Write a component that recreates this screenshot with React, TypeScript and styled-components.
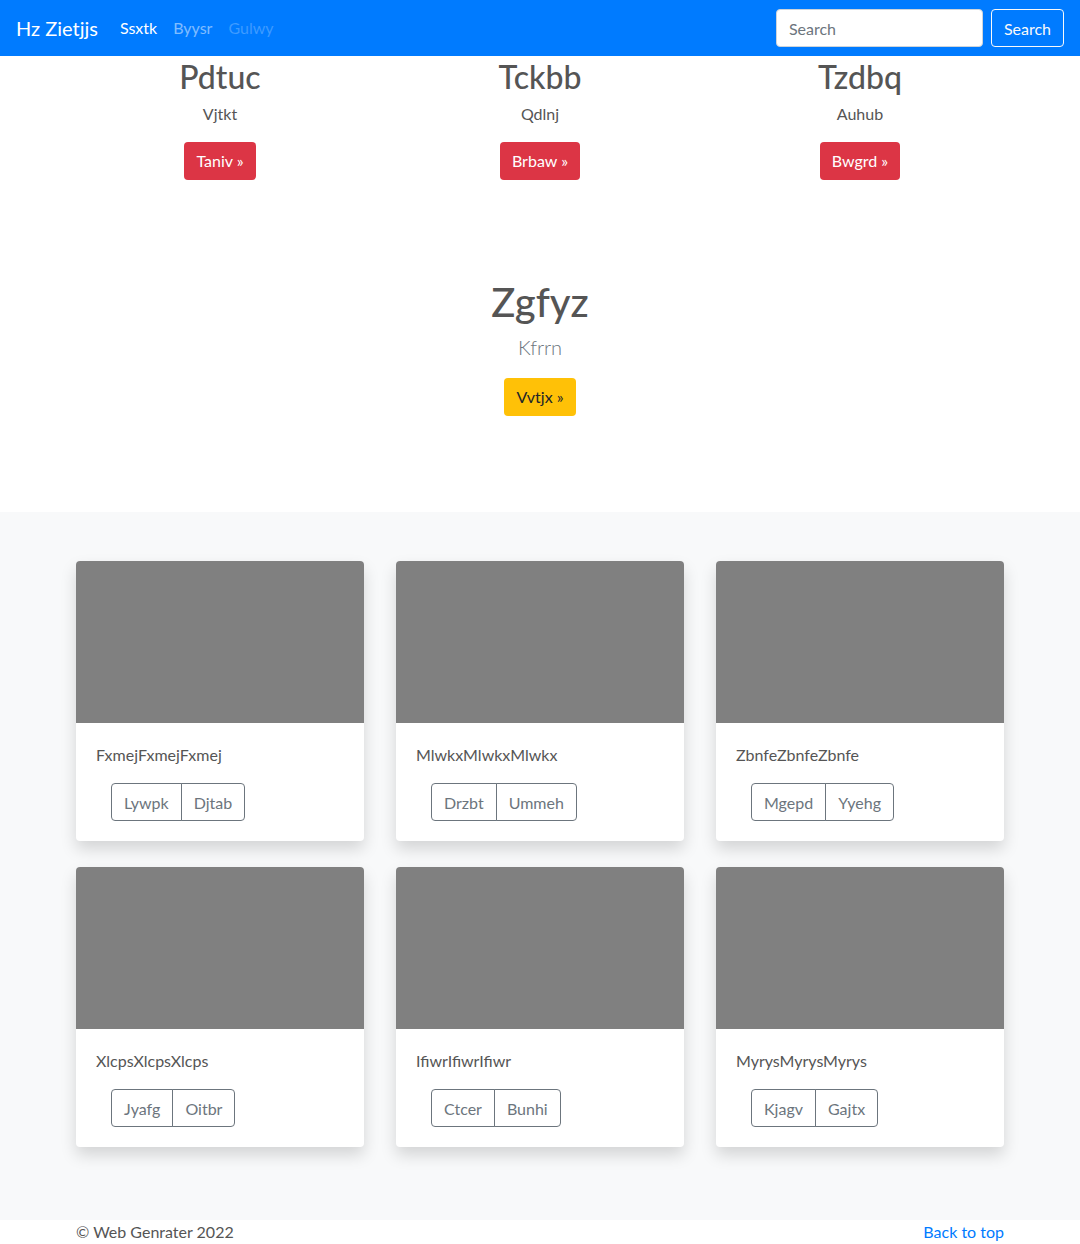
import React from "react";
import styled, { createGlobalStyle } from "styled-components";

const Global = createGlobalStyle`
  * { box-sizing: border-box; }
  body {
    margin: 0;
    font-family: Lato, "Noto Sans", sans-serif;
    font-size: 16px;
    line-height: 1.5;
    color: #555;
    background: #fff;
  }
`;

const Navbar = styled.nav`
  height: 56px;
  background: #007bff;
  display: flex;
  align-items: center;
  padding: 0 16px;
`;

const Brand = styled.a`
  font-size: 20px;
  color: #fff;
  margin-right: 14px;
  line-height: 30px;
  text-decoration: none;
`;

const NavLinks = styled.div`
  display: flex;
  flex: 1;
`;

const NavLink = styled.a<{ $alpha: number }>`
  padding: 8px;
  font-size: 16px;
  color: rgba(255, 255, 255, ${(p) => p.$alpha});
  text-decoration: none;
`;

const SearchForm = styled.form`
  display: flex;
  gap: 8px;
  align-items: center;
`;

const SearchInput = styled.input`
  width: 207px;
  height: 38px;
  border: 1px solid #ced4da;
  border-radius: 4px;
  padding: 6px 12px;
  font-family: inherit;
  font-size: 16px;
  color: #495057;
  &::placeholder { color: #6c757d; }
`;

const OutlineLightButton = styled.button`
  height: 38px;
  padding: 6px 12px;
  background: transparent;
  border: 1px solid #f8f9fa;
  border-radius: 4px;
  color: #f8f9fa;
  font-family: inherit;
  font-size: 16px;
`;

const Container = styled.div`
  width: 960px;
  margin: 0 auto;
`;

const FeatureRow = styled.div`
  display: grid;
  grid-template-columns: repeat(3, 1fr);
`;

const Feature = styled.div`
  text-align: center;
  padding: 0 15px;
`;

const FeatureTitle = styled.h2`
  font-size: 32px;
  font-weight: 500;
  line-height: 1.2;
  padding-top: 2px;
  margin: 0 0 6px;
  color: #555;
`;

const Para = styled.p`
  margin: 0 0 16px;
`;

const SolidButton = styled.a<{ $bg: string; $fg: string }>`
  display: inline-flex;
  align-items: center;
  height: 38px;
  padding: 0 12px;
  font-size: 16px;
  border-radius: 4px;
  background: ${(p) => p.$bg};
  color: ${(p) => p.$fg};
  text-decoration: none;
  vertical-align: top;
`;

const Hero = styled.section`
  text-align: center;
  padding: 80px 0 96px;
`;

const HeroTitle = styled.h1`
  font-size: 40px;
  font-weight: 500;
  line-height: 1.2;
  padding-top: 2px;
  margin: 0 0 6px;
  color: #555;
`;

const Lead = styled.p`
  font-size: 20px;
  font-weight: 300;
  color: #6c757d;
  margin: 0 0 16px;
`;

const Album = styled.section`
  background: #f8f9fa;
  padding: 49px 0 47px;
`;

const CardGrid = styled.div`
  display: grid;
  grid-template-columns: repeat(3, 288px);
  column-gap: 32px;
  row-gap: 26px;
  padding: 0 16px;
  margin-bottom: 26px;
`;

const Card = styled.div`
  background: #fff;
  border-radius: 4px;
  overflow: hidden;
  box-shadow: 0 8px 16px rgba(0, 0, 0, 0.15);
`;

const Thumb = styled.div`
  height: 162px;
  background: #808080;
`;

const CardBody = styled.div`
  padding: 20px;
`;

const CardText = styled.p`
  margin: 0 0 16px;
  font-size: 16px;
  color: #555;
`;

const BtnGroup = styled.div`
  display: flex;
  margin-left: 15px;
`;

const GroupButton = styled.button<{ $first?: boolean }>`
  height: 38px;
  padding: 0 12px;
  background: transparent;
  border: 1px solid #6c757d;
  color: #6c757d;
  font-family: inherit;
  font-size: 16px;
  border-radius: ${(p) => (p.$first ? "4px 0 0 4px" : "0 4px 4px 0")};
  margin-left: ${(p) => (p.$first ? "0" : "-1px")};
`;

const Footer = styled.footer`
  width: 960px;
  margin: 0 auto;
  padding: 0 16px;
  display: flex;
  justify-content: space-between;
  line-height: 24px;
  color: #555;
`;

const FooterLink = styled.a`
  color: #007bff;
  text-decoration: none;
`;

const features = [
  { title: "Pdtuc", text: "Vjtkt", btn: "Taniv" },
  { title: "Tckbb", text: "Qdlnj", btn: "Brbaw" },
  { title: "Tzdbq", text: "Auhub", btn: "Bwgrd" },
];

const cards = [
  { t: "FxmejFxmejFxmej", a: "Lywpk", b: "Djtab" },
  { t: "MlwkxMlwkxMlwkx", a: "Drzbt", b: "Ummeh" },
  { t: "ZbnfeZbnfeZbnfe", a: "Mgepd", b: "Yyehg" },
  { t: "XlcpsXlcpsXlcps", a: "Jyafg", b: "Oitbr" },
  { t: "IfiwrIfiwrIfiwr", a: "Ctcer", b: "Bunhi" },
  { t: "MyrysMyrysMyrys", a: "Kjagv", b: "Gajtx" },
];

export default function App() {
  return (
    <>
      <Global />
      <Navbar>
        <Brand href="#">Hz Zietjjs</Brand>
        <NavLinks>
          <NavLink $alpha={1} href="#">Ssxtk</NavLink>
          <NavLink $alpha={0.5} href="#">Byysr</NavLink>
          <NavLink $alpha={0.25} href="#">Gulwy</NavLink>
        </NavLinks>
        <SearchForm onSubmit={(e) => e.preventDefault()}>
          <SearchInput placeholder="Search" />
          <OutlineLightButton type="submit">Search</OutlineLightButton>
        </SearchForm>
      </Navbar>
      <Container>
        <FeatureRow>
          {features.map((f) => (
            <Feature key={f.title}>
              <FeatureTitle>{f.title}</FeatureTitle>
              <Para>{f.text}</Para>
              <Para>
                <SolidButton $bg="#dc3545" $fg="#fff" href="#">
                  {f.btn} »
                </SolidButton>
              </Para>
            </Feature>
          ))}
        </FeatureRow>
      </Container>
      <Hero>
        <HeroTitle>Zgfyz</HeroTitle>
        <Lead>Kfrrn</Lead>
        <SolidButton $bg="#ffc107" $fg="#212529" href="#">
          Vvtjx »
        </SolidButton>
      </Hero>
      <Album>
        <Container>
          <CardGrid>
            {cards.map((c) => (
              <Card key={c.t}>
                <Thumb />
                <CardBody>
                  <CardText>{c.t}</CardText>
                  <BtnGroup>
                    <GroupButton $first>{c.a}</GroupButton>
                    <GroupButton>{c.b}</GroupButton>
                  </BtnGroup>
                </CardBody>
              </Card>
            ))}
          </CardGrid>
        </Container>
      </Album>
      <Footer>
        <span>© Web Genrater 2022</span>
        <FooterLink href="#">Back to top</FooterLink>
      </Footer>
    </>
  );
}
